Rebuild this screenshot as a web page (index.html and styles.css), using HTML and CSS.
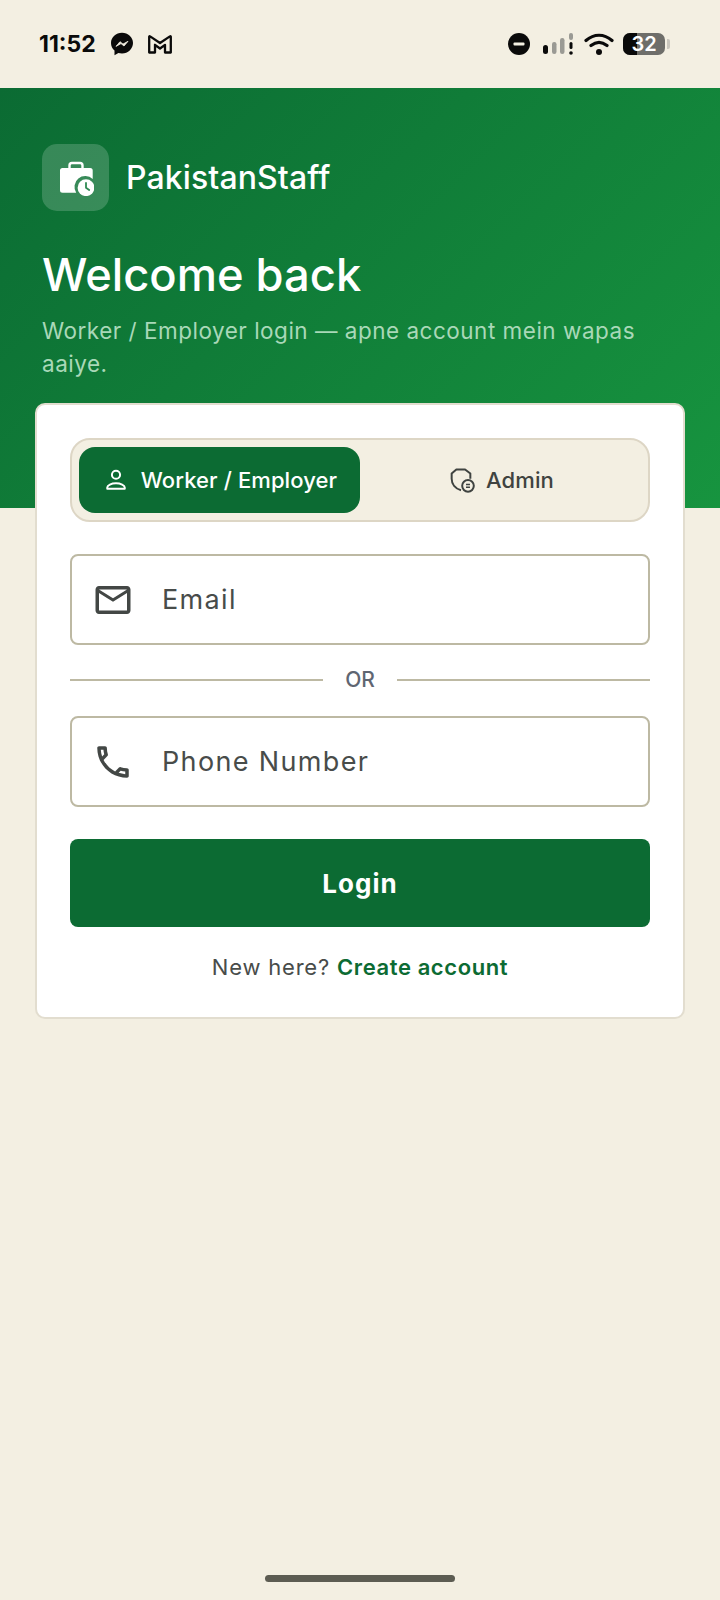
FILE: index.html
```html
<!DOCTYPE html>
<html>
<head>
    <title>PakistanStaff</title>
    <link rel="stylesheet" href="styles.css">
</head>
<body>
    <div class="status-bar">
        <div class="status-left">
            <span class="clock">11:52</span>
            <svg width="24" height="24" viewBox="0 0 24 24">
                <path d="M12 .8C6 .8 1 5.200 1 11c0 3 1.300 5.700 3.500 7.500v4.700l3.900-2.200c1.100.3 2.300.5 3.600.5 6 0 11-4.700 11-10.500S18 .8 12 .8z" fill="#0a0a0a"/>
                <path d="M6 14.400l4-4.700 3 2.400 5-2.800-4 4.700-3-2.400z" fill="#f3efe2" stroke="#f3efe2" stroke-width=".8" stroke-linejoin="round"/>
            </svg>
            <svg width="26" height="22" viewBox="0 0 26 22">
                <path d="M2.200 19.500V3.800c0-.5.500-.7.900-.4L13 10l9.900-6.600c.4-.3.900-.1.900.4v15.700h-5.800v-7.700L13 15.500l-5-3.700v7.700z" fill="none" stroke="#0a0a0a" stroke-width="2.300" stroke-linejoin="round"/>
            </svg>
        </div>
        <div class="status-right">
            <svg width="24" height="24" viewBox="0 0 24 24">
                <circle cx="12" cy="12" r="11" fill="#0a0a0a"/>
                <rect x="6.500" y="10.500" width="11" height="3" rx="1" fill="#f3efe2"/>
            </svg>
            <svg class="signal" width="32" height="24" viewBox="0 0 32 24">
                <rect x="1" y="13" width="5" height="9" rx="2.500" fill="#0a0a0a"/>
                <rect x="10" y="10" width="4.500" height="12" rx="2.200" fill="#9a9a94"/>
                <rect x="18" y="6" width="4.500" height="16" rx="2.200" fill="#9a9a94"/>
                <rect x="27" y="1" width="4" height="7" rx="2" fill="#9a9a94"/>
                <rect x="27.500" y="10" width="3" height="7" rx="1.500" fill="#0a0a0a"/>
                <circle cx="29" cy="21" r="1.800" fill="#0a0a0a"/>
            </svg>
            <svg width="30" height="24" viewBox="0 0 30 24">
                <path d="M2 8.500C10 1.500 20 1.500 28 8.500M7 13.500c5-4 11-4 16 0" fill="none" stroke="#0a0a0a" stroke-width="3.200" stroke-linecap="round"/>
                <circle cx="15" cy="20" r="3" fill="#0a0a0a"/>
            </svg>
            <div class="battery">
                <div class="battery-body">
                    <div class="battery-fill"></div>
                    <span class="battery-text">32</span>
                </div>
                <div class="battery-cap"></div>
            </div>
        </div>
    </div>

    <div class="hero">
        <div class="brand">
            <div class="brand-logo">
                <svg width="36" height="36" viewBox="0 0 36 36">
                    <path d="M11.500 8V5.500C11.500 4 12.500 3 14 3h8c1.500 0 2.500 1 2.500 2.500V8" fill="none" stroke="#fff" stroke-width="2.400"/>
                    <path d="M2 10.500Q2 8 4.500 8H32.200Q34.700 8 34.700 10.500V19A10.800 10.800 0 0 0 18.200 32.700H4.500Q2 32.700 2 30.200z" fill="#fff"/>
                    <circle cx="28" cy="27.700" r="8.400" fill="#fff"/>
                    <path d="M28 23v4.700l3.200 2.300" fill="none" stroke="#2f8a53" stroke-width="1.800" stroke-linecap="round"/>
                </svg>
            </div>
            <span class="brand-name">PakistanStaff</span>
        </div>
        <h1>Welcome back</h1>
        <p class="hero-sub">Worker / Employer login — apne account mein wapas aaiye.</p>
    </div>

    <div class="card">
        <div class="tabs">
            <div class="tab active">
                <svg width="28" height="28" viewBox="0 0 24 24" fill="none" stroke="#fff" stroke-width="1.700">
                    <circle cx="12" cy="7.500" r="3.500"/>
                    <path d="M4.500 19.500v-1c0-2 3.500-3.700 7.500-3.700s7.500 1.700 7.500 3.700v1z" stroke-linejoin="round"/>
                </svg>
                <span>Worker / Employer</span>
            </div>
            <div class="tab">
                <svg width="28" height="28" viewBox="-1.500 0 24 24" fill="none" stroke="#3f4340" stroke-width="1.700" stroke-linejoin="round">
                    <path d="M10.500 20.800C5.500 19.500 2.500 15.500 2.500 11V6.500L6.500 3h7.500l4.500 3.500V11"/>
                    <circle cx="16.500" cy="17" r="5"/>
                    <path d="M14.800 15.800h3.400M14.800 18.300h3.400" stroke-width="1.300"/>
                </svg>
                <span>Admin</span>
            </div>
        </div>

        <div class="field">
            <svg width="42" height="42" viewBox="0 0 24 24" fill="#434745">
                <path d="M20 4H4c-1.100 0-1.990.9-1.990 2L2 18c0 1.100.9 2 2 2h16c1.100 0 2-.9 2-2V6c0-1.100-.9-2-2-2zm0 14H4V8l8 5 8-5v10zm-8-7L4 6h16l-8 5z"/>
            </svg>
            <span class="placeholder">Email</span>
        </div>

        <div class="divider">
            <div class="divider-line"></div>
            <span>OR</span>
            <div class="divider-line"></div>
        </div>

        <div class="field">
            <svg width="42" height="42" viewBox="0 0 24 24" fill="#434745">
                <path d="M6.540 5c.06.89.21 1.760.45 2.590l-1.200 1.200c-.41-1.200-.67-2.470-.76-3.790h1.510m9.860 12.020c.85.24 1.720.39 2.600.45v1.490c-1.320-.09-2.590-.35-3.800-.75l1.200-1.190M7.500 3H4c-.55 0-1 .45-1 1 0 9.390 7.610 17 17 17 .55 0 1-.45 1-1v-3.490c0-.55-.45-1-1-1-1.240 0-2.450-.2-3.570-.57-.1-.04-.21-.05-.31-.05-.26 0-.51.1-.71.29l-2.200 2.200c-2.830-1.450-5.150-3.760-6.590-6.590l2.200-2.200c.28-.28.36-.67.25-1.020C8.700 6.450 8.500 5.250 8.500 4c0-.55-.45-1-1-1z"/>
            </svg>
            <span class="placeholder">Phone Number</span>
        </div>

        <div class="login-btn">Login</div>

        <p class="signup">New here? <a class="signup-link">Create account</a></p>
    </div>

    <div class="home-bar"></div>
</body>
</html>
```

FILE: styles.css
```css
body {
    font-family: Inter, "Noto Sans", sans-serif;
    background-color: #f3efe2;
    margin: 0;
    padding: 0;
    min-height: 1600px;
    position: relative;
}

.status-bar {
    height: 88px;
    padding: 0 50px 0 39px;
    display: flex;
    justify-content: space-between;
    align-items: center;
    box-sizing: border-box;
}

.status-left {
    display: flex;
    align-items: center;
    gap: 13px;
}

.status-right {
    display: flex;
    align-items: center;
    gap: 9px;
}

.signal {
    margin: 0 1px 0 2px;
}

.clock {
    font-size: 23px;
    font-weight: 700;
    color: #0a0a0a;
    margin-right: 1px;
}

.battery {
    display: flex;
    align-items: center;
    gap: 2px;
}

.battery-body {
    width: 42px;
    height: 22px;
    border-radius: 7px;
    background-color: #6e6e6a;
    position: relative;
    overflow: hidden;
    text-align: center;
}

.battery-fill {
    position: absolute;
    left: 0;
    top: 0;
    bottom: 0;
    width: 14px;
    background-color: #0a0a0a;
}

.battery-text {
    position: relative;
    font-size: 20px;
    font-weight: 600;
    line-height: 22px;
    color: #fff;
}

.battery-cap {
    width: 3px;
    height: 10px;
    background-color: #c9c6bd;
    border-radius: 0 2px 2px 0;
}

.hero {
    height: 420px;
    box-sizing: border-box;
    padding: 56px 42px 0;
    background: linear-gradient(135deg, #0b6b33, #17943f);
    color: #fff;
}

.brand {
    display: flex;
    align-items: center;
    gap: 17px;
}

.brand-logo {
    width: 67px;
    height: 67px;
    border-radius: 15px;
    background-color: rgba(255, 255, 255, 0.18);
    display: flex;
    align-items: center;
    justify-content: center;
}

.brand-name {
    font-size: 32px;
    font-weight: 500;
    letter-spacing: 0.1px;
}

h1 {
    margin: 34px 0 0;
    font-size: 45.3px;
    font-weight: 500;
    line-height: 60px;
}

.hero-sub {
    margin: 9px 0 0;
    font-size: 22.5px;
    line-height: 33px;
    letter-spacing: 0.5px;
    color: #a9d8b8;
}

.card {
    margin: -105px 35px 0 35px;
    height: 616px;
    box-sizing: border-box;
    padding: 33px 33px 0;
    background-color: #fff;
    border: 2px solid #e2ddcf;
    border-radius: 10px;
}

.tabs {
    height: 84px;
    box-sizing: border-box;
    padding: 7px;
    display: flex;
    background-color: #f3efe2;
    border: 2px solid #ddd6c5;
    border-radius: 20px;
}

.tab {
    flex: 1;
    display: flex;
    align-items: center;
    justify-content: center;
    gap: 11px;
    font-size: 22px;
    font-weight: 500;
    letter-spacing: 0.1px;
    color: #3f4340;
    border-radius: 16px;
}

.tab.active {
    background-color: #0c6b33;
    color: #fff;
}

.field {
    margin-top: 32px;
    height: 91px;
    box-sizing: border-box;
    padding: 0 20px;
    display: flex;
    align-items: center;
    gap: 28px;
    border: 2px solid #bdb9a3;
    border-radius: 8px;
}

.placeholder {
    font-size: 27px;
    letter-spacing: 1.35px;
    color: #484c4a;
}

.divider {
    margin: 22px 0 24px;
    display: flex;
    align-items: center;
    gap: 22px;
    font-size: 21px;
    font-weight: 500;
    color: #5f6672;
}

.divider-line {
    flex: 1;
    height: 2px;
    background-color: #bdb9a3;
}

.divider + .field {
    margin-top: 0;
}

.login-btn {
    margin-top: 32px;
    height: 88px;
    background-color: #0c6b33;
    border-radius: 8px;
    color: #fff;
    font-size: 26px;
    font-weight: 700;
    letter-spacing: 1px;
    display: flex;
    align-items: center;
    justify-content: center;
}

.signup {
    margin: 27px 0 0;
    text-align: center;
    font-size: 22px;
    letter-spacing: 0.8px;
    color: #484c4a;
}

.signup-link {
    color: #0c6b33;
    font-weight: 600;
    letter-spacing: 0.6px;
}

.home-bar {
    position: absolute;
    left: 265px;
    top: 1575px;
    width: 190px;
    height: 7px;
    border-radius: 4px;
    background-color: #5c5c52;
}
```
